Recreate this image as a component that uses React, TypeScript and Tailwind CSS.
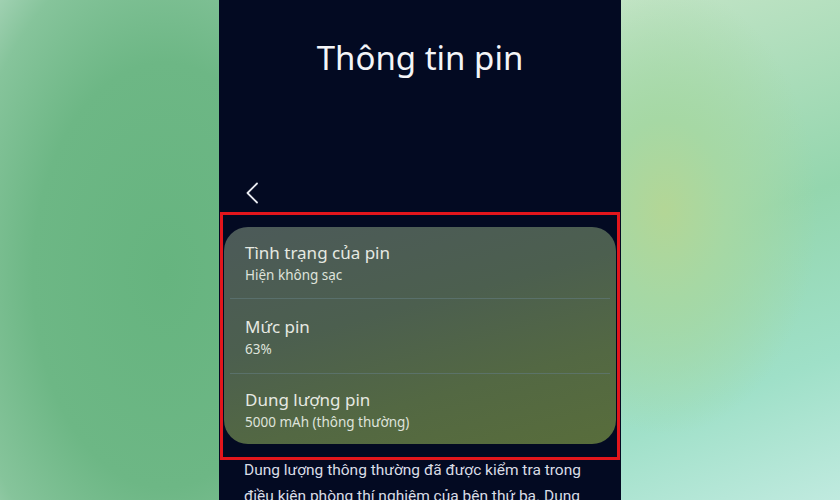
const ROWS = [
  { title: 'Tình trạng của pin', sub: 'Hiện không sạc' },
  { title: 'Mức pin', sub: '63%' },
  { title: 'Dung lượng pin', sub: '5000 mAh (thông thường)' },
]

export default function App() {
  return (
    <div className="flex h-[500px] w-[840px] overflow-hidden" style={{ fontFamily: '"Noto Sans", "Open Sans", sans-serif' }}>
      <div className="w-[219px] shrink-0 bg-[radial-gradient(ellipse_120%_85%_at_75%_55%,#66b47f_0%,#6db785_50%,#86c49b_78%,#b5dbc4_100%)]" />

      <div className="flex w-[402px] shrink-0 flex-col bg-[#030a22]">
        <h1 className="pt-[34px] text-center text-[33px] font-normal leading-[48px] text-[#f4f5f8]">Thông tin pin</h1>

        <div className="mt-[100px] pl-[26px]">
          <svg width="14" height="22" viewBox="0 0 14 22" fill="none">
            <path d="M12 1.5 2.5 11 12 20.5" stroke="#e8eaf0" strokeWidth="1.8" strokeLinecap="round" strokeLinejoin="round" />
          </svg>
        </div>

        <div className="ml-px mt-[8px] w-[400px] border-[3px] border-[#e3161c] px-px pb-[13px] pt-[12px]">
          <div className="overflow-hidden rounded-[24px] bg-[linear-gradient(165deg,#4c5a59_0%,#4c5f4f_40%,#536843_70%,#586d3b_100%)]">
            {ROWS.map((r, i) => (
              <div key={r.title}>
                {i > 0 && <div className="mx-[6px] h-px bg-[#5f7878]/70" />}
                <div className={`pl-[21px] ${i === 0 ? 'pb-[13px] pt-[13px]' : i === 1 ? 'pb-[14px] pt-[15px]' : 'pb-[12px] pt-[13px]'}`}>
                  <div className="text-[17px] leading-[26px] text-[#e6e9e2]">{r.title}</div>
                  <div className="text-[13.5px] leading-[19px] text-[#dfe3db]">{r.sub}</div>
                </div>
              </div>
            ))}
          </div>
        </div>

        <p
          className="mt-[-3px] w-[380px] pl-[25px] text-[15.5px] leading-[26px] text-[#d9dce6]"
          style={{ fontFamily: 'Roboto, "Noto Sans", sans-serif' }}
        >
          Dung lượng thông thường đã được kiểm tra trong điều kiện phòng thí nghiệm của bên thứ ba. Dung lượng có thể thay đổi.
        </p>
      </div>

      <div className="w-[219px] shrink-0 bg-[radial-gradient(ellipse_70%_45%_at_20%_42%,#b3d696_0%,#a6d8a4_40%,transparent_100%),linear-gradient(160deg,#c3e4c6_0%,#94d6ae_45%,#9fe0c8_75%,#c0eadf_100%)]" />
    </div>
  )
}
